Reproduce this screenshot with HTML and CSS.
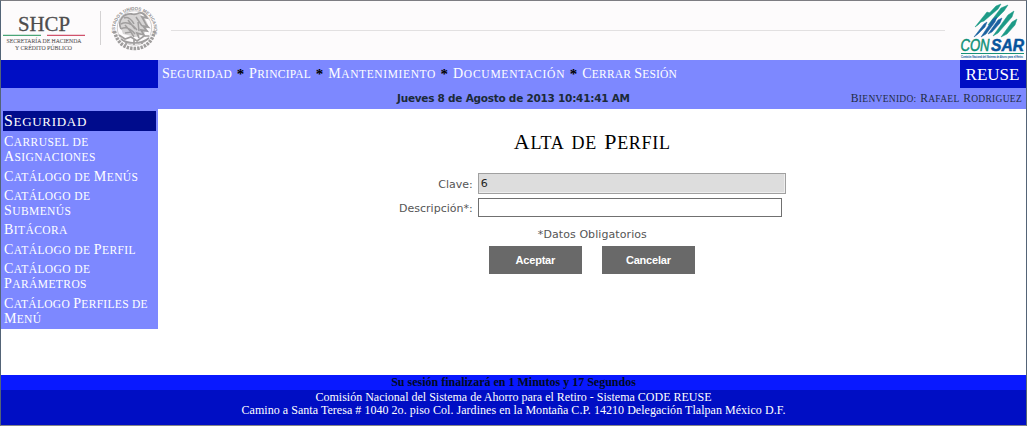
FILE: index.html
```html
<!DOCTYPE html>
<html lang="es">
<head>
<meta charset="utf-8">
<title>Alta de Perfil</title>
<link rel="stylesheet" href="styles.css">
</head>
<body>
<div class="page">
  <header class="banner">
    <svg class="gov" width="160" height="59" viewBox="1 1 160 59">
      <text x="18" y="31" class="shcp" textLength="52" lengthAdjust="spacingAndGlyphs">SHCP</text>
      <path d="M3 35.3H41" stroke="#4aa577" stroke-width="1.2"/>
      <path d="M47 35.3H85" stroke="#d0526b" stroke-width="1.2"/>
      <text x="6.500" y="43" class="dept" textLength="75" lengthAdjust="spacingAndGlyphs">SECRETARÍA DE HACIENDA</text>
      <text x="15" y="50" class="dept" textLength="57" lengthAdjust="spacingAndGlyphs">Y CRÉDITO PÚBLICO</text>
      <path d="M100.500 11V45" stroke="#d4d2d3" stroke-width="1"/>
      <defs><path id="arc" d="M115.300 33A19.500 19.500 0 1 1 153.700 33"/></defs>
      <text class="sealtext"><textPath href="#arc" textLength="69" lengthAdjust="spacingAndGlyphs">ESTADOS UNIDOS MEXICANOS</textPath></text>
      <g fill="none" stroke="#a09e9e">
        <path d="M121 28C118 20 124 14 132 14C139 11 145 16 148 25L144 34L136 37L123 34Z" fill="#d6d4d4" stroke="none"/>
        <circle cx="134.500" cy="28" r="17.200" stroke-width=".5"/>
        <path d="M114.500 31C117 43 125 48.500 134.500 48.500S152 43 154.500 31" stroke-width="3.500" stroke-dasharray="2.500 1"/>
        <path d="M121 29C117 20 124 13 132 14C135 15 137 14 139 13C143 12 145 15 147 18L142 17C144 20 145 24 148 27L143 26L147 31L141 30L144 35L137 33L139 38" stroke-width="1.800"/>
        <path d="M124 18C128 16 132 20 134 24M121 24C127 21 133 25 137 30M121 29C126 26 131 29 135 34M125 33L131 32L134 37M128 20L135 29M125 25L131 32M136 17L142 26M138 22L139 31" stroke-width="1.500"/>
        <path d="M119 35L125 39L131 37L137 41L144 36L149 36M121 39C127 44 141 45 149 38M126 42V45M134 39V45M142 41V44" stroke-width="1.700"/>
      </g>
    </svg>
    <span class="rule"></span>
    <svg class="consar" width="70" height="59" viewBox="957 1 70 59">
      <g fill="#1d9a86" stroke="#1d9a86" stroke-width=".5">
        <path d="M976 27L988 12L991 13L979 25Z"/>
        <path d="M982 22L997 6L1002 4L999 9L985 21Z"/>
        <path d="M989 25L1002 8L1009 5L1005 11L992 24Z"/>
        <path d="M994 36L1009 15L1015 11L1013 17L999 33Z"/>
        <path d="M1002 37L1013 22L1018 19L1016 25L1008 34Z"/>
      </g>
      <g fill="#1b62a0" stroke="#1b62a0" stroke-width=".5">
        <path d="M975 37L985 24L988 22L986 27L979 34Z"/>
        <path d="M982 37L994 19L998 17L996 22L987 34Z"/>
        <path d="M989 34L999 20L1003 18L1001 23L993 32Z"/>
      </g>
      <text x="961.500" y="51" class="con" textLength="29" lengthAdjust="spacingAndGlyphs">CON</text>
      <text x="992" y="51" class="sar" textLength="33" lengthAdjust="spacingAndGlyphs">SAR</text>
      <path d="M962 53.500H1025" stroke="#169178" stroke-width="1"/>
      <text x="962" y="58" class="tag" textLength="62" lengthAdjust="spacingAndGlyphs">Comisión Nacional del Sistema de Ahorro para el Retiro</text>
    </svg>
  </header>

  <div class="menubar">
    <div class="corner"></div>
    <nav class="menu caps">
      <a><span>Seguridad</span></a><b>*</b>
      <a><span>Principal</span></a><b>*</b>
      <a class="wide"><span>Mantenimiento</span></a><b>*</b>
      <a class="wider"><span>Documentación</span></a><b>*</b>
      <a class="last"><span>Cerrar</span> <span>Sesión</span></a>
    </nav>
    <div class="system">REUSE</div>
  </div>
  <div class="status">
    <div class="date">Jueves 8 de Agosto de 2013 10:41:41 AM</div>
    <div class="welcome caps"><span>Bienvenido:</span> <span>Rafael</span> <span>Rodriguez</span></div>
  </div>

  <div class="body">
    <aside class="side caps">
      <h2><span>Seguridad</span></h2>
      <ul>
        <li><span>Carrusel</span> de<br><span>Asignaciones</span></li>
        <li><span>Catálogo</span> de <span>Menús</span></li>
        <li><span>Catálogo</span> de<br><span>Submenús</span></li>
        <li><span>Bitácora</span></li>
        <li><span>Catálogo</span> de <span>Perfil</span></li>
        <li><span>Catálogo</span> de<br><span>Parámetros</span></li>
        <li class="tight"><span>Catálogo</span> <span>Perfiles</span> de<br><span>Menú</span></li>
      </ul>
    </aside>
    <main class="content">
      <h1 class="caps"><span>Alta</span> de <span>Perfil</span></h1>
      <form class="form">
        <div class="row"><label for="clave">Clave:</label><input id="clave" class="key" value="6" readonly></div>
        <div class="row"><label for="desc">Descripción*:</label><input id="desc" class="desc"></div>
        <p class="note">*Datos Obligatorios</p>
        <div class="actions"><button type="button">Aceptar</button><button type="button">Cancelar</button></div>
      </form>
    </main>
  </div>

  <div class="session">Su sesión finalizará en 1 Minutos y 17 Segundos</div>
  <footer class="footer">Comisión Nacional del Sistema de Ahorro para el Retiro - Sistema CODE REUSE<br><span>Camino a Santa Teresa # 1040 2o. piso Col. Jardines en la Montaña C.P. 14210 Delegación Tlalpan México D.F.</span></footer>
</div>
</body>
</html>
```

FILE: styles.css
```css
* { box-sizing: border-box; }
body { margin: 0; font-family: "Liberation Serif", serif; }
.page {
  width: 1027px; height: 426px; overflow: hidden;
  display: flex; flex-direction: column;
  background: #fff;
  border: 1px solid #536477; border-top-color: #7d7d82; border-bottom-color: #85858a;
}

/* Capitals with a slightly larger initial on each word */
.caps { text-transform: uppercase; white-space: nowrap; }
.caps span { display: inline-block; }
.caps span::first-letter { font-size: 1.22em; line-height: 0; }

.banner { height: 59px; flex: none; display: flex; background: #fdfbfc; }
.banner svg { flex: none; display: block; }
.rule { width: 774px; margin: 29px 0 0 10px; height: 1px; background: #e2e0e1; }
.consar { margin-left: auto; }
.shcp { font: 20px "Liberation Serif", serif; fill: #4e4c4d; stroke: #4e4c4d; stroke-width: .3px; }
.dept { font: 6px "Liberation Serif", serif; fill: #5f5d5e; stroke: #5f5d5e; stroke-width: .1px; }
.sealtext { font: bold 4.5px "Liberation Sans", sans-serif; fill: #8d8b8c; }
.con { font: italic 16px "Liberation Sans", sans-serif; fill: #0d9076; stroke: #0d9076; stroke-width: .5px; }
.sar { font: italic bold 16px "Liberation Sans", sans-serif; fill: #07549c; stroke: #07549c; stroke-width: .5px; }
.tag { font: 4px "Liberation Sans", sans-serif; fill: #1968a5; stroke: #1968a5; stroke-width: .15px; }

.menubar { height: 28px; flex: none; display: flex; background: #7d88ff; }
.corner { width: 157px; background: #000ec4; }
.menu {
  flex: 1; padding: 1px 0 0 4px; display: flex;
  font-size: 11.5px; line-height: 26px; letter-spacing: .25px; color: #fff;
}
.menu b { width: 17px; text-align: center; color: #000; font: bold 15px/26px "Liberation Serif", serif; }
.menu .wide { letter-spacing: .62px; }
.menu .wider { letter-spacing: .75px; }
.menu .last { letter-spacing: .2px; }
.system { width: 66px; padding-right: 1px; background: #000ec4; color: #fff; text-align: center; font-size: 17px; line-height: 29px; }

.status { height: 21px; flex: none; display: flex; background: #7d88ff; color: #1d2b44; }
.date { width: 631px; padding-left: 396px; white-space: nowrap; font: bold 10.5px/21px "DejaVu Sans", sans-serif; letter-spacing: -.25px; color: #1b2a38; }
.welcome { margin-left: auto; padding-right: 4px; font-size: 9.5px; line-height: 22px; letter-spacing: .28px; word-spacing: 1px; }

.body { height: 266px; flex: none; display: flex; }
.side { width: 157px; height: 220px; padding: 2px 2px 0; background: #7d88ff; color: #fff; }
.side h2 { margin: 0; padding-left: 1px; height: 20px; background: #000c8c; font-size: 13px; font-weight: normal; line-height: 22px; letter-spacing: .7px; }
.side ul { margin: 0; padding: 4px 0 0 1px; list-style: none; font-size: 11.5px; line-height: 15.3px; letter-spacing: .42px; }
.side li { margin-bottom: 4px; }
.side .tight { letter-spacing: .3px; }
.content { width: 869px; }
.content h1 { margin: 20px 0 0; padding-left: 356px; font-size: 18px; font-weight: normal; line-height: 28px; letter-spacing: .7px; word-spacing: 2px; color: #000; }
.form { padding: 15px 0 0 220px; font-family: "DejaVu Sans", sans-serif; font-size: 11px; color: #555; }
.row { display: flex; align-items: center; height: 24px; }
.row label { width: 95px; text-align: right; white-space: nowrap; letter-spacing: .02px; }
.row input { margin: 0 0 0 5px; font: 11px "DejaVu Sans", sans-serif; color: #222; }
.row .key { width: 308px; height: 21px; margin-top: -2px; padding: 1px 2px 0; background: #ddd; border: 1px solid #a0a0a0; box-shadow: inset -1px -1px #eee; }
.desc { width: 304px; height: 19px; padding: 0 2px; background: #fff; border: 1px solid #707070; }
.row .desc { margin-top: -1px; }
.note { margin: 7px 0 3px 160px; line-height: 16px; letter-spacing: .08px; }
.actions { display: flex; gap: 20px; padding-left: 111px; }
.actions button { width: 93px; height: 28px; padding: 0 0 1px; border: 0; background: #696969; color: #fff; font: bold 11px "Liberation Sans", sans-serif; letter-spacing: -.2px; }

.session { height: 15px; flex: none; background: #0919ff; color: #000a24; text-align: center; font-size: 12px; font-weight: bold; line-height: 15px; }
.footer { flex: 1; padding-top: 1px; background: #000ec4; color: #fff; text-align: center; font-size: 12px; line-height: 13px; }
.footer span { letter-spacing: .04px; }
```
